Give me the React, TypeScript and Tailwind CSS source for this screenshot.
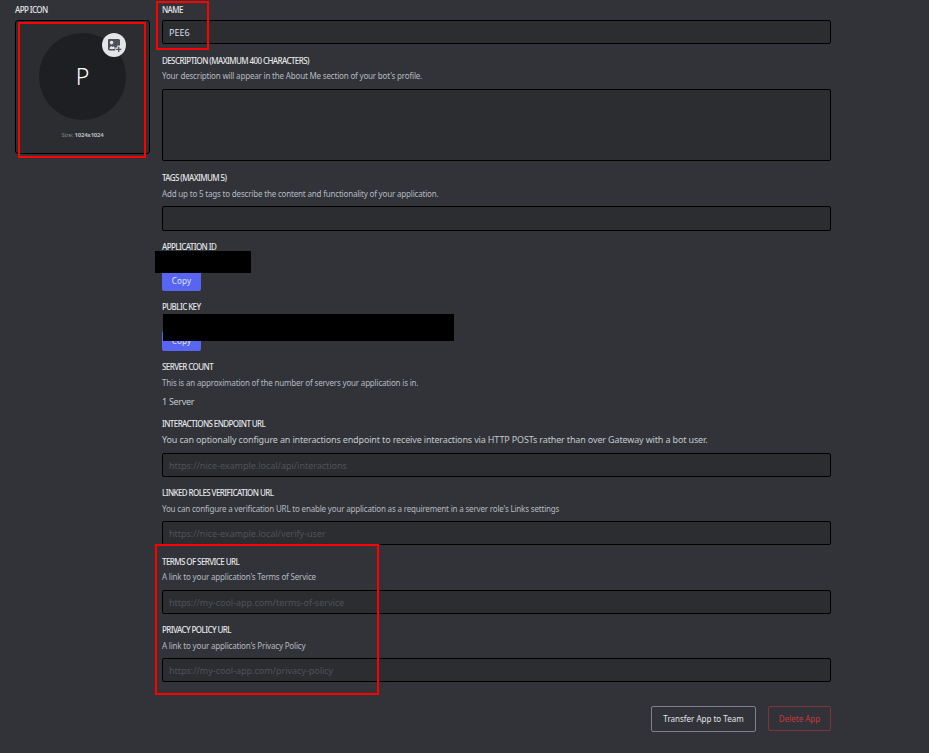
import type { ReactNode } from "react";

function Label({ children, className = "" }: { children: ReactNode; className?: string }) {
  return (
    <div className={`h-3 text-[8px] leading-3 font-medium tracking-[-0.59px] whitespace-nowrap text-[#e3e5e8] ${className}`}>
      {children}
    </div>
  );
}

function Hint({ children, className = "" }: { children: ReactNode; className?: string }) {
  return (
    <div className={`h-3 text-[8px] leading-3 tracking-[-0.18px] whitespace-nowrap text-[#b5bac1] ${className}`}>
      {children}
    </div>
  );
}

const box = "block w-full rounded-[2px] border border-black bg-[#2b2d31] outline-none";
const field = `${box} h-6 px-1.5 text-[9px] tracking-[-0.02px] text-[#dbdee1] placeholder:text-[#505259] placeholder:opacity-100`;

function Copy({ className }: { className: string }) {
  return (
    <button className={`block w-[39px] rounded-[2px] bg-[#5865f2] text-center text-[8px] tracking-[0.2px] text-[#e0e3ff] ${className}`}>
      Copy
    </button>
  );
}

function AddImageIcon() {
  return (
    <svg viewBox="0 0 14 14" className="h-3.5 w-3.5 overflow-visible" fill="none">
      <path
        fill="#4e5058"
        fillRule="evenodd"
        d="M2 1H11.500Q13 1 13 2.500V7.500H10.300V9.500H8.300V12.500H2.500Q1 12.500 1 11V2Q1 1 2 1ZM4.600 2.800a1.800 1.800 0 1 0 0 3.600 1.800 1.800 0 0 0 0-3.600ZM2.600 11H7.600V9.200L6.500 8.200 5.500 9 4.300 8 2.600 9.800Z"
      />
      <path stroke="#4e5058" strokeWidth="1.3" d="M11.700 8.700v5.200M9.100 11.300h5.200" />
    </svg>
  );
}

export default function App() {
  return (
    <div className="relative flex h-[753px] w-[929px] gap-3 overflow-hidden bg-[#313338] pt-1 pl-[15px] font-['Noto_Sans',sans-serif]">
      <aside className="w-[135px] shrink-0">
        <Label>APP ICON</Label>
        <div className="mt-1 flex h-[134px] flex-col items-center rounded-[3px] border border-black bg-[#2b2d31] pt-3">
          <div className="relative flex h-[87px] w-[87px] items-center justify-center rounded-full bg-[#1e1f22] text-[23px] font-light text-white">
            P
            <div className="absolute top-0 right-0 flex h-6 w-6 items-center justify-center rounded-full bg-[#e3e5e8]">
              <AddImageIcon />
            </div>
          </div>
          <div className="mt-[9px] text-[6px] leading-3 tracking-[-0.2px] text-[#80848e]">
            Size: <b className="text-[#b5bac1]">1024x1024</b>
          </div>
        </div>
      </aside>

      <main className="w-[669px] shrink-0">
        <Label>NAME</Label>
        <input className={`${field} mt-1`} defaultValue="PEE6" />

        <Label className="mt-[11px]">DESCRIPTION (MAXIMUM 400 CHARACTERS)</Label>
        <Hint className="mt-[3px]">Your description will appear in the About Me section of your bot's profile.</Hint>
        <textarea className={`${box} mt-[7px] h-[72px] resize-none`} />

        <Label className="mt-[11px]">TAGS (MAXIMUM 5)</Label>
        <Hint className="mt-1">Add up to 5 tags to describe the content and functionality of your application.</Hint>
        <div className={`${box} mt-1.5 h-[25px]`} />

        <Label className="mt-2.5">APPLICATION ID</Label>
        <Copy className="mt-[18px] h-5 leading-5" />

        <Label className="mt-2.5">PUBLIC KEY</Label>
        <Copy className="mt-[18px] h-5 leading-5" />

        <Label className="mt-2.5">SERVER COUNT</Label>
        <Hint className="mt-1">This is an approximation of the number of servers your application is in.</Hint>
        <div className="mt-[7px] h-3 text-[9px] leading-3 tracking-[-0.3px] text-[#c4c9ce]">1 Server</div>

        <Label className="mt-2.5">INTERACTIONS ENDPOINT URL</Label>
        <div className="mt-1 h-3 text-[9px] leading-3 tracking-[-0.15px] whitespace-nowrap text-[#c4c9ce]">
          You can optionally configure an interactions endpoint to receive interactions via HTTP POSTs rather than over Gateway with a bot user.
        </div>
        <input className={`${field} mt-[7px]`} placeholder="https://nice-example.local/api/interactions" />

        <Label className="mt-2.5">LINKED ROLES VERIFICATION URL</Label>
        <Hint className="mt-1">
          You can configure a verification URL to enable your application as a requirement in a server role's Links settings
        </Hint>
        <input className={`${field} mt-1.5`} placeholder="https://nice-example.local/verify-user" />

        <Label className="mt-[11px]">TERMS OF SERVICE URL</Label>
        <Hint className="mt-[3px]">A link to your application's Terms of Service</Hint>
        <input className={`${field} mt-[7px]`} placeholder="https://my-cool-app.com/terms-of-service" />

        <Label className="mt-2.5">PRIVACY POLICY URL</Label>
        <Hint className="mt-1">A link to your application's Privacy Policy</Hint>
        <input className={`${field} mt-1.5`} placeholder="https://my-cool-app.com/privacy-policy" />

        <div className="mt-6 flex items-start justify-end gap-3 text-[8px]">
          <button className="h-[26px] w-[105px] rounded-[2px] border border-[#80828a] text-[#e3e5e8]">Transfer App to Team</button>
          <button className="h-[25px] w-[63px] rounded-[2px] border border-[#803338] text-[#c7383d]">Delete App</button>
        </div>
      </main>

      <div className="absolute top-[251px] left-[155px] h-[22px] w-24 bg-black" />
      <div className="absolute top-[314px] left-[163px] h-[27px] w-[291px] bg-black" />
      <div className="absolute top-[22px] left-[18px] h-[136px] w-32 border-2 border-[#ff0000]" />
      <div className="absolute top-px left-[156px] h-[49px] w-[53px] border-2 border-[#ff0000]" />
      <div className="absolute top-[544px] left-[155px] h-[151px] w-56 border-2 border-[#ff0000]" />
    </div>
  );
}
